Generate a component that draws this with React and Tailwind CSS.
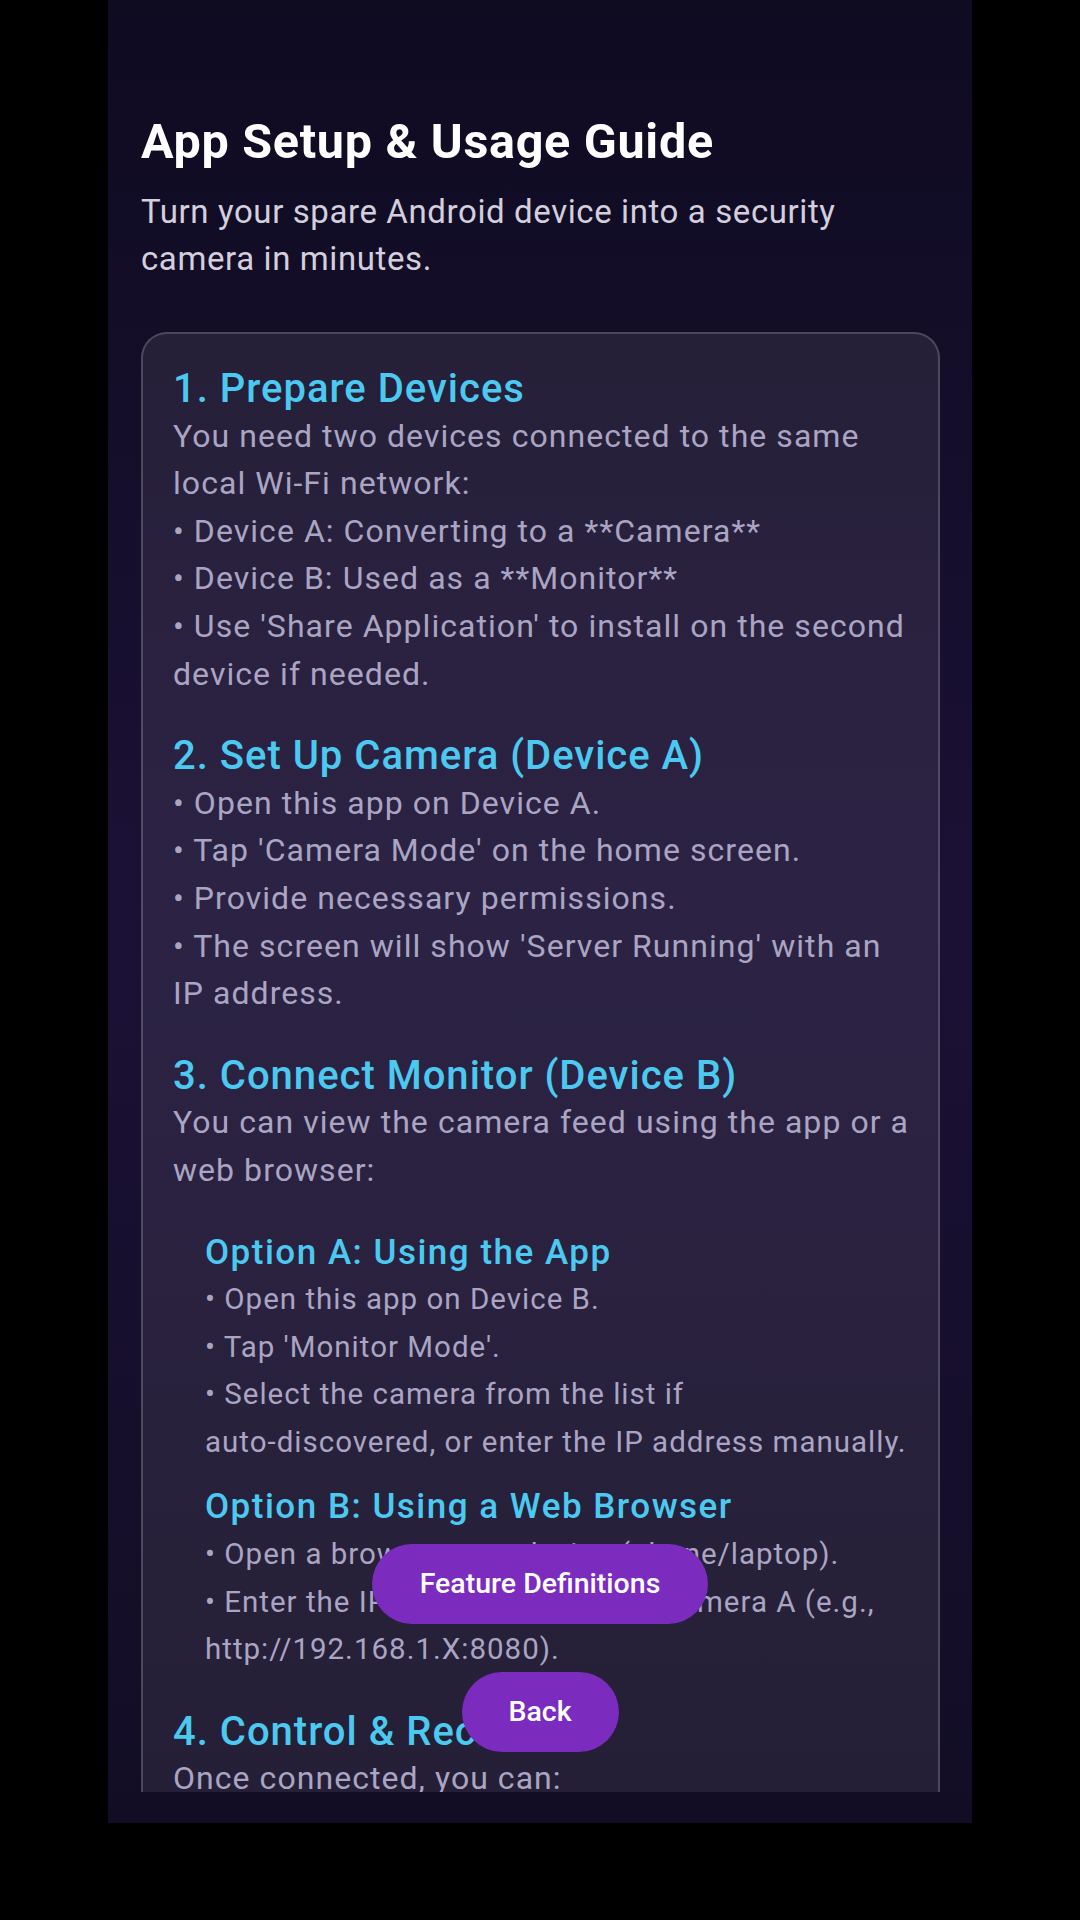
import React from "react";

const SECTIONS = [
  {
    title: "1. Prepare Devices",
    lines: [
      "You need two devices connected to the same",
      "local Wi-Fi network:",
      "• Device A: Converting to a **Camera**",
      "• Device B: Used as a **Monitor**",
      "• Use 'Share Application' to install on the second",
      "device if needed.",
    ],
  },
  {
    title: "2. Set Up Camera (Device A)",
    lines: [
      "• Open this app on Device A.",
      "• Tap 'Camera Mode' on the home screen.",
      "• Provide necessary permissions.",
      "• The screen will show 'Server Running' with an",
      "IP address.",
    ],
  },
  {
    title: "3. Connect Monitor (Device B)",
    lines: [
      "You can view the camera feed using the app or a",
      "web browser:",
    ],
    options: [
      {
        title: "Option A: Using the App",
        lines: [
          "• Open this app on Device B.",
          "• Tap 'Monitor Mode'.",
          "• Select the camera from the list if",
          "auto-discovered, or enter the IP address manually.",
        ],
      },
      {
        title: "Option B: Using a Web Browser",
        lines: [
          "• Open a browser on a device (phone/laptop).",
          "• Enter the IP address shown on Camera A (e.g.,",
          "http://192.168.1.X:8080).",
        ],
      },
    ],
  },
  {
    title: "4. Control & Record",
    lines: ["Once connected, you can:", "• Start or stop recording remotely."],
  },
];

function Section({ title, lines, options, first }) {
  return (
    <section className={first ? "" : "mt-[34px]"}>
      <h2 className="text-[40px] leading-[47.6px] font-medium tracking-[1px] text-[#4cc9f0] whitespace-nowrap">
        {title}
      </h2>
      <div className="text-[32px] leading-[47.6px] tracking-[1.05px] text-[#aaa5c3]">
        {lines.map((l) => (
          <div key={l} className="whitespace-nowrap">
            {l}
          </div>
        ))}
      </div>
      {options && (
        <div className="pl-[32px]">
          {options.map((o, i) => (
            <div key={o.title} className={i === 0 ? "mt-[34px]" : "mt-[17px]"}>
              <h3 className="text-[35px] leading-[47.6px] font-medium tracking-[1.5px] text-[#4cc9f0] whitespace-nowrap">
                {o.title}
              </h3>
              <div className="text-[29.5px] leading-[47.6px] tracking-[1px] text-[#aaa5c3]">
                {o.lines.map((l) => (
                  <div key={l} className="whitespace-nowrap">
                    {l}
                  </div>
                ))}
              </div>
            </div>
          ))}
        </div>
      )}
    </section>
  );
}

export default function App() {
  return (
    <div className="w-full h-[1920px] bg-black font-[Roboto,sans-serif]">
      <div className="relative mx-auto w-[864px] h-[1823px] bg-linear-to-b from-[#0f0b21] via-[#1b1135] to-[#120d25]">
        {/* scrolling content */}
        <div className="h-[1792px] overflow-hidden pl-[33px] pr-[32px] pt-[114px]">
          <h1 className="text-[48.5px] leading-[55px] font-bold tracking-[0.7px] text-white whitespace-nowrap">
            App Setup &amp; Usage Guide
          </h1>
          <p className="mt-[19px] text-[33px] leading-[47px] tracking-[0.6px] text-[#d3cfdd]">
            Turn your spare Android device into a security
            <br />
            camera in minutes.
          </p>

          <div className="mt-[50px] rounded-[26px] border-2 border-white/[0.18] bg-white/[0.08] px-[30px] pt-[31px] pb-[40px]">
            {SECTIONS.map((s, i) => (
              <Section key={s.title} {...s} first={i === 0} />
            ))}
          </div>
        </div>

        {/* floating actions */}
        <div className="absolute left-0 right-0 bottom-[71px] flex flex-col items-center gap-[48px]">
          <button className="w-[336px] h-[80px] rounded-full bg-[#7b2cbf] text-white text-[28.5px] font-medium">
            Feature Definitions
          </button>
          <button className="w-[157px] h-[80px] rounded-full bg-[#7b2cbf] text-white text-[28.5px] font-medium">
            Back
          </button>
        </div>
      </div>
    </div>
  );
}
